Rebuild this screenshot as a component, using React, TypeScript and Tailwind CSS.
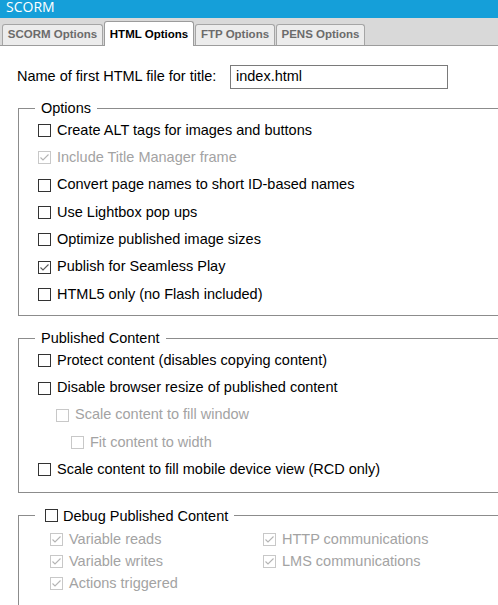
import React from 'react';

type BoxProps = { checked?: boolean; disabled?: boolean };

const Box = ({ checked = false, disabled = false }: BoxProps) => (
  <svg width="13" height="13" viewBox="0 0 13 13" className="shrink-0">
    <rect
      x="0.5"
      y="0.5"
      width="12"
      height="12"
      fill="white"
      stroke={disabled ? '#c8c8c8' : '#333333'}
    />
    {checked && (
      <polyline
        points="2.5,6.5 5,9 10.5,3.5"
        fill="none"
        stroke={disabled ? '#b4b4b4' : '#5a5a5a'}
        strokeWidth="1.1"
      />
    )}
  </svg>
);

type RowProps = {
  label: string;
  checked?: boolean;
  disabled?: boolean;
  indent?: string;
  tall?: boolean;
};

const Row = ({ label, checked, disabled, indent = 'pl-[19px]', tall = true }: RowProps) => (
  <div className={`flex items-center gap-[6px] ${indent} ${tall ? 'h-[27.3px]' : 'h-[22px]'}`}>
    <Box checked={checked} disabled={disabled} />
    <span className={disabled ? 'text-[#a3a3a3]' : 'text-black'}>{label}</span>
  </div>
);

const tabs = [
  { name: 'SCORM Options', w: 'w-[101px]' },
  { name: 'HTML Options', w: 'w-[90px]', active: true },
  { name: 'FTP Options', w: 'w-[80px]' },
  { name: 'PENS Options', w: 'w-[89px]' },
];

export default function App() {
  return (
    <div className="w-[498px] h-[605px] overflow-hidden bg-white font-['Liberation_Sans',Arial,sans-serif] text-[14.5px]">
      <div className="h-[18px] bg-[#159fd9] px-[6px] text-white font-['Open_Sans',sans-serif] text-[14px] leading-[14px]">
        SCORM
      </div>

      <div className="h-[28px] bg-[#d9d9d9] border-b border-[#9c9c9c] flex items-end pl-[2px] gap-[1px]">
        {tabs.map((t) =>
          t.active ? (
            <div
              key={t.name}
              className={`${t.w} h-[25px] -mb-px bg-white border border-b-0 border-[#9c9c9c] rounded-t-[3px] flex items-center justify-center text-[11.5px] font-bold text-black pt-[2px]`}
            >
              {t.name}
            </div>
          ) : (
            <div
              key={t.name}
              className={`${t.w} h-[21px] bg-[#ececec] border border-b-0 border-[#a5a5a5] rounded-t-[3px] flex items-center justify-center text-[11.5px] font-bold text-[#6b6b6b]`}
            >
              {t.name}
            </div>
          )
        )}
      </div>

      <div className="flex items-center h-[23px] mt-[19px]">
        <span className="pl-[17px] w-[230px] text-black">Name of first HTML file for title:</span>
        <div className="w-[218px] h-[24px] border border-[#7a7a7a] flex items-center pl-[5px] text-black">
          index.html
        </div>
      </div>

      <fieldset className="ml-[18px] mt-[11px] w-[500px] border border-[#8c8c8c] pb-[7px]">
        <legend className="ml-[16px] px-[6px] leading-[18px] text-black">Options</legend>
        <Row label="Create ALT tags for images and buttons" />
        <Row label="Include Title Manager frame" checked disabled />
        <Row label="Convert page names to short ID-based names" />
        <Row label="Use Lightbox pop ups" />
        <Row label="Optimize published image sizes" />
        <Row label="Publish for Seamless Play" checked />
        <Row label="HTML5 only (no Flash included)" />
      </fieldset>

      <fieldset className="ml-[18px] mt-[13px] w-[500px] border border-[#8c8c8c] pb-[8px]">
        <legend className="ml-[16px] px-[6px] leading-[18px] text-black">Published Content</legend>
        <Row label="Protect content (disables copying content)" />
        <Row label="Disable browser resize of published content" />
        <Row label="Scale content to fill window" disabled indent="pl-[37px]" />
        <Row label="Fit content to width" disabled indent="pl-[52px]" />
        <Row label="Scale content to fill mobile device view (RCD only)" />
      </fieldset>

      <fieldset className="ml-[18px] mt-[14px] w-[500px] h-[200px] border border-[#8c8c8c]">
        <legend className="ml-[16px] pl-[10px] pr-[6px] leading-[18px] text-black">
          <span className="flex items-center gap-[5px]">
            <Box />
            Debug Published Content
          </span>
        </legend>
        <div className="flex pt-[4px]">
          <div className="w-[225px]">
            <Row label="Variable reads" checked disabled indent="pl-[31px]" tall={false} />
            <Row label="Variable writes" checked disabled indent="pl-[31px]" tall={false} />
            <Row label="Actions triggered" checked disabled indent="pl-[31px]" tall={false} />
          </div>
          <div>
            <Row label="HTTP communications" checked disabled indent="pl-[19px]" tall={false} />
            <Row label="LMS communications" checked disabled indent="pl-[19px]" tall={false} />
          </div>
        </div>
      </fieldset>
    </div>
  );
}
